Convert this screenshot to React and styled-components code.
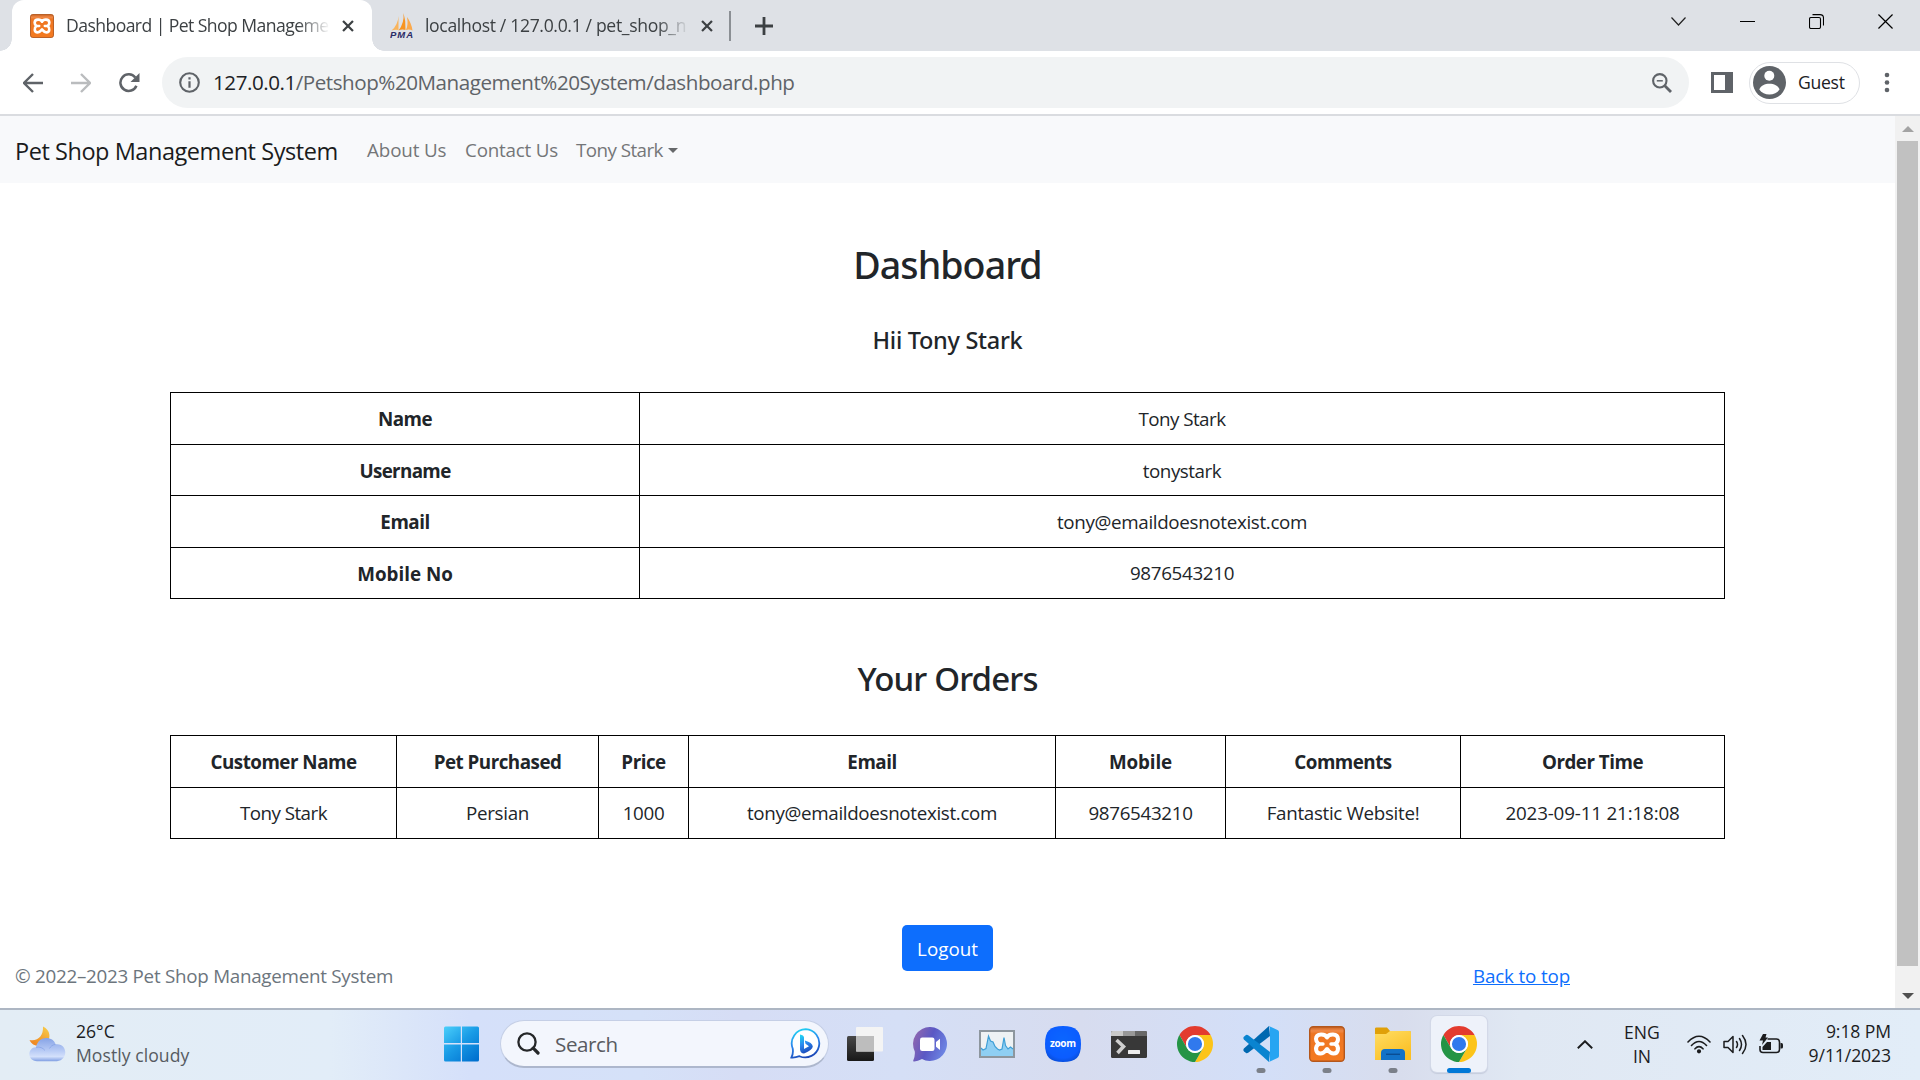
import React from 'react';
import styled, { createGlobalStyle, css } from 'styled-components';

const GlobalStyle = createGlobalStyle`
  *, *::before, *::after { box-sizing: border-box; }
  body { margin: 0; overflow: hidden; background: #fff; }
  svg { display: block; flex: none; }
`;

const Desktop = styled.div`
  width: 1920px;
  height: 1080px;
  display: flex;
  flex-direction: column;
  overflow: hidden;
  font-family: "Open Sans", "Noto Sans", sans-serif;
  color: #212529;
  white-space: nowrap;
`;

/* ---------- browser chrome ---------- */

const TabStrip = styled.header`
  height: 51px;
  flex: none;
  display: flex;
  background: #dee1e6;
  padding-left: 12px;
`;

const Tab = styled.div`
  position: relative;
  display: flex;
  align-items: center;
  height: 51px;
  width: ${(p) => p.$width}px;
  padding-left: 18px;
  border-radius: 12px 12px 0 0;
  ${(p) =>
    p.$active &&
    css`
      background: #fff;
      &::before,
      &::after {
        content: '';
        position: absolute;
        bottom: 0;
        width: 12px;
        height: 12px;
      }
      &::before {
        left: -12px;
        background: radial-gradient(circle at 0 0, transparent 11.5px, #fff 12px);
      }
      &::after {
        right: -12px;
        background: radial-gradient(circle at 100% 0, transparent 11.5px, #fff 12px);
      }
    `}
`;

const TabTitle = styled.span`
  width: ${(p) => p.$width}px;
  margin: 0 12px 0 ${(p) => p.$left}px;
  padding-bottom: 1px;
  overflow: hidden;
  font-size: 17.6px;
  line-height: 28px;
  letter-spacing: ${(p) => p.$track}px;
  color: #3c4043;
  mask-image: linear-gradient(90deg, #000 232px, transparent 264px);
`;

const TabDivider = styled.i`
  width: 1.5px;
  height: 30px;
  margin: 11px 24px 0 0;
  background: #8b8f94;
`;

const WindowControls = styled.div`
  margin-left: auto;
  display: flex;
  height: 43px;
`;

const WindowButton = styled.span`
  width: 69px;
  display: grid;
  place-items: center;
`;

const Centered = styled.span`
  display: flex;
  align-items: center;
`;

const Toolbar = styled.div`
  height: 65px;
  flex: none;
  display: flex;
  align-items: center;
  border-bottom: 2px solid #dadce0;
  background: #fff;
  padding-left: 23px;
`;

const NavIcons = styled.div`
  display: flex;
  gap: 28px;
  width: 139px;
`;

const Omnibox = styled.div`
  width: 1527px;
  height: 51px;
  display: flex;
  align-items: center;
  padding: 0 17px;
  border-radius: 26px;
  background: #f1f3f4;
`;

const Url = styled.span`
  flex: 1;
  margin-left: 13px;
  padding-bottom: 2px;
  font-size: 20.6px;
  line-height: 30px;
  letter-spacing: -0.46px;
  color: #5f6368;
`;

const Host = styled.span`
  color: #202124;
`;

const PanelIcon = styled.span`
  margin: 0 16px 0 22px;
`;

const Profile = styled.div`
  width: 111px;
  height: 42px;
  display: flex;
  align-items: center;
  gap: 12px;
  padding-left: 3px;
  border: 1.5px solid #dfe1e5;
  border-radius: 21px;
  font-size: 17.6px;
  letter-spacing: -0.3px;
  color: #202124;
`;

const ProfileName = styled.span`
  padding-bottom: 1px;
`;

const Kebab = styled.span`
  margin-left: 24px;
`;

/* ---------- web page ---------- */

const Viewport = styled.div`
  height: 892px;
  flex: none;
  display: flex;
`;

const Page = styled.div`
  flex: 1;
  display: flex;
  flex-direction: column;
  font-size: 18.8px;
  line-height: 29px;
`;

const Navbar = styled.nav`
  height: 67px;
  display: flex;
  align-items: center;
  padding: 2px 0 0 15px;
  background: #f8f9fb;
`;

const Brand = styled.a`
  width: 352px;
  padding-top: 2px;
  font-size: 23.5px;
  letter-spacing: -0.45px;
  color: #1a1b1c;
`;

const NavLink = styled.a`
  display: flex;
  align-items: center;
  width: ${(p) => p.$width}px;
  letter-spacing: ${(p) => p.$track}px;
  color: #747678;
`;

const Caret = styled.i`
  margin-left: 5px;
  border: 5.5px solid transparent;
  border-top-color: #66686a;
  border-bottom: 0;
`;

const Main = styled.main`
  display: flex;
  flex-direction: column;
  align-items: center;
`;

const Heading = styled.h1`
  margin: ${(p) => p.$top}px 0 0;
  font-family: "Noto Sans", sans-serif;
  font-weight: 500;
  font-size: ${(p) => p.$size}px;
  line-height: ${(p) => p.$line}px;
  letter-spacing: ${(p) => p.$track}px;
`;

const Table = styled.table`
  width: 1555px;
  margin-top: ${(p) => p.$top}px;
  table-layout: fixed;
  border-collapse: collapse;
  text-align: center;
`;

const Col = styled.col`
  width: ${(p) => p.$width}px;
`;

const Row = styled.tr`
  height: ${(p) => p.$height}px;
`;

const HeadCell = styled.th`
  padding: 2px 0 0;
  border: 1px solid #000;
  font-weight: 700;
  letter-spacing: ${(p) => p.$track ?? -0.5}px;
`;

const Cell = styled.td`
  padding: ${(p) => p.$drop ?? 0}px 0 0;
  border: 1px solid #000;
  letter-spacing: ${(p) => p.$track ?? -0.32}px;
`;

const LogoutButton = styled.button`
  width: 91px;
  height: 46px;
  margin-top: 86px;
  padding: 3px 0 0;
  border: 0;
  border-radius: 5px;
  background: #0d6efd;
  color: #fff;
  font: inherit;
`;

const Footer = styled.footer`
  display: flex;
  justify-content: space-between;
  margin-top: -9px;
  padding: 0 325px 0 15px;
  color: #6c757d;
  letter-spacing: -0.26px;
`;

const TopLink = styled.a`
  color: #0d6efd;
  text-decoration: underline;
  letter-spacing: -0.15px;
`;

const Scrollbar = styled.aside`
  width: 25px;
  display: flex;
  flex-direction: column;
  align-items: center;
  background: #f1f1f1;
`;

const ScrollArrow = styled.span`
  height: 25px;
  display: flex;
  align-items: center;
`;

const ScrollThumb = styled.span`
  width: 21px;
  height: 825px;
  margin-bottom: 17px;
  background: #c1c1c1;
`;

/* ---------- taskbar ---------- */

const Taskbar = styled.div`
  height: 72px;
  flex: none;
  display: flex;
  align-items: center;
  padding: 0 29px 2px 29px;
  border-top: 2px solid #adb6c3;
  background: linear-gradient(90deg, #e3edf5 0, #e2edf8 330px, #d5e0fa 470px, #d5e1f8 640px, #d6ddf5 740px, #d5dff6 900px, #d7dcef 1080px, #d3dff8 1260px, #d8dded 1400px, #e0e8f3 1520px, #e2edf8 1920px);
`;

const Weather = styled.div`
  width: 415px;
  display: flex;
  align-items: center;
  gap: 10px;
`;

const Lines = styled.div`
  width: ${(p) => p.$width}px;
  text-align: ${(p) => p.$align || 'left'};
  font-size: 17.6px;
  line-height: 24px;
  letter-spacing: ${(p) => p.$track || 0}px;
  color: #1b1c1e;
  margin: ${(p) => p.$shift || 0}px ${(p) => p.$after || 0}px 0 0;
`;

const Muted = styled.div`
  color: #565b61;
  letter-spacing: 0.05px;
`;

const SearchBox = styled.div`
  width: 329px;
  height: 48px;
  margin: 0 3px 0 20px;
  display: flex;
  align-items: center;
  padding: 0 7px 0 16px;
  border: 1.5px solid #c5cfe6;
  border-bottom: 2px solid #adb7cd;
  border-radius: 24px;
  background: #f3f6fd;
`;

const SearchLabel = styled.span`
  flex: 1;
  margin-left: 15px;
  font-size: 20.6px;
  letter-spacing: -0.4px;
  color: #595b60;
`;

const AppSlot = styled.div`
  width: 66px;
  display: flex;
  justify-content: center;
`;

const AppTile = styled.div`
  position: relative;
  width: 56px;
  height: 56px;
  display: grid;
  place-items: center;
  border-radius: 6px;
  ${(p) => p.$active && css`background: #eef2fa; box-shadow: 0 0 0 1px #d3d9e8, 0 1px 1px 1px #c5ccdc;`}
`;

const Indicator = styled.i`
  position: absolute;
  bottom: -1px;
  left: 50%;
  transform: translateX(-50%);
  width: ${(p) => (p.$active ? 24 : 9)}px;
  height: 5px;
  border-radius: 2.5px;
  background: ${(p) => (p.$active ? '#0078d7' : '#7b8089')};
`;

const Tray = styled.div`
  margin-left: auto;
  display: flex;
  align-items: center;
`;

const TrayIcons = styled.div`
  display: flex;
  gap: 12px;
  margin-left: 20px;
`;

/* ---------- icons ---------- */

const Xampp = ({ size }) => (
  <svg width={size} height={size} viewBox="0 0 36 36">
    <defs>
      <linearGradient id="xo" x1="0" y1="0" x2="0" y2="1">
        <stop offset="0" stopColor="#c9601f" />
        <stop offset=".12" stopColor="#f08a48" />
        <stop offset=".2" stopColor="#ee7623" />
        <stop offset="1" stopColor="#f47a20" />
      </linearGradient>
    </defs>
    <rect x=".7" y=".7" width="34.6" height="34.6" rx="3.5" fill="url(#xo)" stroke="#b4571c" strokeWidth="1.4" />
    <path d="M18 11.500C16.500 7.800 7.200 6.800 7 13c0 2.600 1.200 3.800 2.600 5C6 20.500 6 27.500 11.500 27.500c4 0 4.500-2.500 6.500-4.500 2 2 2.500 4.500 6.500 4.500 5.500 0 5.500-7 2-9.500 1.400-1.200 2.600-2.400 2.500-5C28.800 6.800 19.500 7.800 18 11.500Z" fill="none" stroke="#fff" strokeWidth="4" strokeLinejoin="round" />
    <path d="M9 18h5M22 18h5" stroke="#fff" strokeWidth="3.400" strokeLinecap="round" />
  </svg>
);

const Pma = () => (
  <svg width="24" height="26" viewBox="0 0 24 26">
    <path d="M8.500 3Q8 12 1.500 17.500Q5 16.500 8.500 17Z" fill="#f9b45c" />
    <path d="M13.500 0Q14.500 10 8.500 17.500Q12 16 15.500 17Q16 8 13.500 0Z" fill="#f79421" />
    <path d="M17 4Q18.500 12 16 17Q19 16 22.500 17.500Q21.500 10 17 4Z" fill="#fba94c" />
    <text x="0" y="24.800" fontFamily="Liberation Sans, sans-serif" fontWeight="700" fontStyle="italic" fontSize="9.500" textLength="23" fill="#2b2b66">PMA</text>
  </svg>
);

const Cross = ({ size, width, color }) => (
  <svg width={size} height={size} viewBox="0 0 14 14" stroke={color} strokeWidth={width} fill="none">
    <path d="M1.200 1.200 12.800 12.800M12.800 1.200 1.200 12.800" />
  </svg>
);

const Plus = () => (
  <svg width="18" height="18" viewBox="0 0 18 18" stroke="#3c4043" strokeWidth="2.800">
    <path d="M9 0V18M0 9H18" />
  </svg>
);

const Arrow = ({ color, flip }) => (
  <svg width="20" height="20" viewBox="0 0 20 20" fill="none" stroke={color} strokeWidth="2.400">
    <path d={flip ? 'M0 10H18.500M10 1 19 10 10 19' : 'M20 10H1.500M10 1 1 10 10 19'} />
  </svg>
);

const Reload = () => (
  <svg width="22" height="20" viewBox="0 0 22 20">
    <path d="M16.300 4.600A8.300 8.300 0 1 0 17.400 12.800" fill="none" stroke="#5f6368" strokeWidth="2.500" />
    <path d="M20.500 0V9H11.500Z" fill="#5f6368" />
  </svg>
);

const Info = () => (
  <svg width="21" height="21" viewBox="0 0 21 21">
    <circle cx="10.500" cy="10.500" r="9.300" fill="none" stroke="#5f6368" strokeWidth="2.100" />
    <path d="M10.500 9.200V15.800M10.500 5.200V7.500" stroke="#5f6368" strokeWidth="2.200" />
  </svg>
);

const ZoomOut = () => (
  <svg width="20" height="20" viewBox="0 0 20 20" fill="none" stroke="#5f6368">
    <circle cx="7.800" cy="7.800" r="6.700" strokeWidth="2.100" />
    <path d="M4.800 7.800H10.800" strokeWidth="1.500" />
    <path d="M12.800 12.800 19 19" strokeWidth="2.800" />
  </svg>
);

const SidePanel = () => (
  <svg width="22" height="21" viewBox="0 0 22 21">
    <path d="M0 0H22V21H0ZM3 3V18H14V3Z" fill="#5f6368" fillRule="evenodd" />
  </svg>
);

const Avatar = () => (
  <svg width="33" height="33" viewBox="0 0 33 33">
    <circle cx="16.500" cy="16.500" r="16.500" fill="#5f6368" />
    <circle cx="16.300" cy="9.800" r="5" fill="#fff" />
    <path d="M6.300 23.500C7.500 19.500 12 17.700 16.400 17.700S25.500 19.500 26.500 23.500C24.500 26.800 20.500 28.600 16.400 28.600S8.500 26.800 6.300 23.500Z" fill="#fff" />
  </svg>
);

const Dots = () => (
  <svg width="6" height="21" viewBox="0 0 6 21" fill="#5f6368">
    <circle cx="3" cy="3" r="2.300" />
    <circle cx="3" cy="10.500" r="2.300" />
    <circle cx="3" cy="18" r="2.300" />
  </svg>
);

const Triangle = ({ down }) => (
  <svg width="12" height="6" viewBox="0 0 12 6">
    <path d={down ? 'M0 0H12L6 6Z' : 'M0 6H12L6 0Z'} fill={down ? '#505050' : '#a3a3a3'} />
  </svg>
);

const WeatherIcon = () => (
  <svg width="37" height="36" viewBox="0 0 37 36">
    <defs>
      <linearGradient id="moon" x1="0" y1="1" x2=".6" y2="0">
        <stop offset="0" stopColor="#ee7b1c" />
        <stop offset="1" stopColor="#f6c445" />
      </linearGradient>
      <linearGradient id="cloud" x1="0" y1="0" x2="0" y2="1">
        <stop offset="0" stopColor="#86a3e6" />
        <stop offset=".55" stopColor="#b8cbf5" />
        <stop offset=".8" stopColor="#d3e0fb" />
        <stop offset="1" stopColor="#809fe3" />
      </linearGradient>
    </defs>
    <path d="M14 .5C21.500 4 22.500 12.500 17 17.500 11 22 3 20 .5 14 9 15.500 14.500 10 14 .5Z" fill="url(#moon)" />
    <path d="M8 35.200C-2 35-2 21.500 7 21.300 9 9.500 24 9.500 26.500 18.300 39 16.500 39.500 34.500 28 35.200Z" fill="url(#cloud)" />
    <path d="M7 21.300C11 20.500 14 22 16 24.500M26.500 18.300C23.500 18.800 21.500 20.500 20.500 22.500" fill="none" stroke="#7d9be2" strokeWidth="1" opacity=".6" />
  </svg>
);

const Start = () => (
  <svg width="36" height="36" viewBox="0 0 36 36">
    <defs>
      <linearGradient id="win" gradientUnits="userSpaceOnUse" x1="0" y1="0" x2="30" y2="36">
        <stop offset="0" stopColor="#4cd0fb" />
        <stop offset=".5" stopColor="#199be6" />
        <stop offset="1" stopColor="#0070cf" />
      </linearGradient>
    </defs>
    <path d="M1.500 .5H16.800V17H0V2Q0 .5 1.500.5ZM18 .5H33.500Q35 .5 35 2V17H18ZM0 18.500H16.800V35.500H1.500Q0 35.500 0 34ZM18 18.500H35V34Q35 35.500 33.500 35.500H18Z" fill="url(#win)" />
  </svg>
);

const Magnifier = () => (
  <svg width="23" height="23" viewBox="0 0 23 23" fill="none" stroke="#252729">
    <circle cx="10" cy="10" r="8.600" strokeWidth="2.300" />
    <path d="M16.200 16.200 21 21" strokeWidth="3.200" strokeLinecap="round" />
  </svg>
);

const Bing = () => (
  <svg width="31" height="31" viewBox="0 0 31 31">
    <defs>
      <linearGradient id="bg" x1=".2" y1="0" x2=".5" y2="1">
        <stop offset="0" stopColor="#1fd3f2" />
        <stop offset=".5" stopColor="#2b87ee" />
        <stop offset="1" stopColor="#1b48b8" />
      </linearGradient>
    </defs>
    <path d="M15.800 1.200A14.100 14.100 0 1 1 9.500 28.200Q5 29.800 1.400 29.500 3.600 25.500 2.700 20.500A14.200 14.200 0 0 1 15.800 1.200Z" fill="#fff" stroke="url(#bg)" strokeWidth="1.800" />
    <path d="M10 6.500Q13.800 7 14 9.500V21L19 18.200 15.500 15.800 14.800 12.500Q22.500 14.500 22.800 18.500 22.500 22 14 25.500 10.500 25.500 10 21.500Z" fill="url(#bg)" />
  </svg>
);

const TaskView = () => (
  <svg width="36" height="34" viewBox="0 0 36 34">
    <defs>
      <linearGradient id="tv" x1="0" y1="0" x2="0" y2="1">
        <stop offset="0" stopColor="#484848" />
        <stop offset="1" stopColor="#181818" />
      </linearGradient>
    </defs>
    <rect y="9" width="27" height="25" rx="1.500" fill="url(#tv)" />
    <rect x="9" y="0" width="27" height="24.500" rx="1" fill="#f4f4f4" />
    <rect x="9" y="9" width="18" height="15.500" fill="#bdbdbd" />
  </svg>
);

const Chat = () => (
  <svg width="36" height="35" viewBox="0 0 36 35">
    <defs>
      <linearGradient id="chat" x1="0" y1=".2" x2="1" y2=".6">
        <stop offset="0" stopColor="#9267ae" />
        <stop offset=".5" stopColor="#5a58c4" />
        <stop offset="1" stopColor="#6d86e4" />
      </linearGradient>
    </defs>
    <path d="M17.500 0A17 17 0 1 1 9 32Q3.500 35 0 34.300 2.300 29.500 1.800 24.500A17 17 0 0 1 17.500 0Z" fill="url(#chat)" />
    <rect x="7" y="10.500" width="14.500" height="13.500" rx="2.200" fill="#fff" />
    <path d="M23 15 27 11.700V23L23 19.800Z" fill="#fff" />
  </svg>
);

const Monitor = () => (
  <svg width="36" height="28" viewBox="0 0 36 28">
    <rect x="1" y="1" width="34" height="26" fill="#eef2f4" stroke="#8d969e" strokeWidth="2" />
    <path d="M2 18 4 20 7 18.500 9.500 6 11.500 11 14 12 16 16.500 18.500 19 20.500 20 23 19 25 7.500 26.500 15.500 29 19 31.500 17 34 19V26H2Z" fill="#8fcff3" />
    <path d="M2 18 4 20 7 18.500 9.500 6 11.500 11 14 12 16 16.500 18.500 19 20.500 20 23 19 25 7.500 26.500 15.500 29 19 31.500 17 34 19" fill="none" stroke="#3f9fd6" strokeWidth="1.200" />
  </svg>
);

const ZoomApp = () => (
  <svg width="36" height="36" viewBox="0 0 36 36">
    <defs>
      <radialGradient id="zm" cx=".5" cy=".4" r=".7">
        <stop offset="0" stopColor="#0b66ff" />
        <stop offset=".7" stopColor="#0b5cff" />
        <stop offset="1" stopColor="#0846c4" />
      </radialGradient>
    </defs>
    <path d="M18 0C31 0 36 5 36 18S31 36 18 36 0 31 0 18 5 0 18 0Z" fill="url(#zm)" />
    <text x="5" y="20.800" fontFamily="Open Sans, sans-serif" fontWeight="700" fontSize="10" textLength="26" fill="#fff">zoom</text>
  </svg>
);

const Terminal = () => (
  <svg width="36" height="27" viewBox="0 0 36 27">
    <rect width="36" height="27" rx="1.500" fill="#383838" />
    <path d="M1.500 0H12V5H0V1.500Q0 0 1.500 0Z" fill="#c9c9c9" />
    <path d="M12 0H24V5H12Z" fill="#989898" />
    <path d="M24 0H34.500Q36 0 36 1.500V5H24Z" fill="#686868" />
    <path d="M5.500 9 12.500 15.500 6.500 22" fill="none" stroke="#cfcfcf" strokeWidth="3.600" />
    <rect x="17" y="19" width="12" height="4" rx=".5" fill="#ededed" />
  </svg>
);

const Chrome = () => (
  <svg width="36" height="36" viewBox="0 0 48 48">
    <path d="M24 12H44.780A24 24 0 0 0 3.220 12L13.610 30A12 12 0 0 1 24 12Z" fill="#e33b2e" />
    <path d="M44.780 12H24A12 12 0 0 1 34.390 30L24 48A24 24 0 0 0 44.780 12Z" fill="#fcc419" />
    <path d="M13.610 30 3.220 12A24 24 0 0 0 24 48L34.390 30A12 12 0 0 1 13.610 30Z" fill="#249445" />
    <circle cx="24" cy="24" r="12" fill="#fff" />
    <circle cx="24" cy="24" r="9.400" fill="#3079ed" />
  </svg>
);

const VsCode = () => (
  <svg width="36" height="36" viewBox="0 0 36 36">
    <path d="M26 0 .9 22.500Q-.2 24 .9 25.200L3 27Q4 27.600 5.200 26.800L27 10Z" fill="#0068b0" />
    <path d="M26 36 .9 13.500Q-.2 12 .9 10.800L3 9Q4 8.400 5.200 9.200L27 26Z" fill="#0a84d0" />
    <path d="M26 0 34.500 4Q36 4.700 36 6V30Q36 31.300 34.500 32L26 36Q27 35 27 33.500V2.500Q27 1 26 0Z" fill="#27a5f2" />
  </svg>
);

const Explorer = () => (
  <svg width="36" height="34" viewBox="0 0 36 34">
    <defs>
      <linearGradient id="fold" x1="0" y1="0" x2=".6" y2="1">
        <stop offset="0" stopColor="#ffdd63" />
        <stop offset="1" stopColor="#fbbf24" />
      </linearGradient>
    </defs>
    <path d="M0 1.500Q0 .5 1.500.5H12L15 4H34.500Q36 4 36 5.500V9H0Z" fill="#e0a008" />
    <path d="M0 7H11L15 4H34.500Q36 4 36 5.500V33H0Z" fill="url(#fold)" />
    <path d="M6 33V26Q6 22 10 22H26Q30 22 30 26V33Z" fill="#1272c8" />
    <path d="M11 27.300H25" stroke="#0a4d92" strokeWidth="1.400" />
  </svg>
);

const Wifi = () => (
  <svg width="24" height="19" viewBox="0 0 24 19" fill="none" stroke="#1b1c1e" strokeWidth="1.600" strokeLinecap="round">
    <path d="M1 7Q12-4.500 23 7M4.500 10.500Q12 2.500 19.500 10.500M8 13.800Q12 9.500 16 13.800" />
    <circle cx="12" cy="16.300" r="1.300" fill="#1b1c1e" />
  </svg>
);

const Volume = () => (
  <svg width="24" height="21" viewBox="0 0 24 21" fill="none" stroke="#1b1c1e" strokeWidth="1.500" strokeLinecap="round" strokeLinejoin="round">
    <path d="M1 7.500H5L10 2.500V18.500L5 13.500H1ZM13.500 7.500Q15.500 10.500 13.500 13.500M16.500 4.500Q20.500 10.500 16.500 16.500M19.500 1.500Q26.500 10.500 19.500 19.500" />
  </svg>
);

const Battery = () => (
  <svg width="24" height="21" viewBox="0 0 24 21">
    <path d="M8.500 5H17.500Q20.500 5 20.500 8V15.500Q20.500 18.500 17.500 18.500H4Q1 18.500 1 15.500V12" fill="none" stroke="#1b1c1e" strokeWidth="1.600" />
    <path d="M21.500 9H22.500Q24 9 24 10.500V13Q24 14.500 22.500 14.500H21.500Z" fill="#1b1c1e" />
    <path d="M8 8H12V16H3.500V13Z" fill="#1b1c1e" />
    <path d="M4 0H7.500L6.500 3.500H9L3 11 4 6.500H.5Z" fill="#1b1c1e" />
  </svg>
);

/* ---------- data ---------- */

const profile = [
  { label: 'Name', value: 'Tony Stark', height: 52, headTrack: -0.5, track: -0.55, drop: 2 },
  { label: 'Username', value: 'tonystark', height: 51, headTrack: -0.65, track: -0.45, drop: 2 },
  { label: 'Email', value: 'tony@emaildoesnotexist.com', height: 52, track: -0.33, drop: 2 },
  { label: 'Mobile No', value: '9876543210', height: 51, headTrack: 0, drop: 0 },
];

const orderColumns = [
  { label: 'Customer Name', width: 226, value: 'Tony Stark', track: -0.55 },
  { label: 'Pet Purchased', width: 202, value: 'Persian' },
  { label: 'Price', width: 90, value: '1000' },
  { label: 'Email', width: 367, value: 'tony@emaildoesnotexist.com', track: -0.33 },
  { label: 'Mobile', width: 170, value: '9876543210', headTrack: -0.1 },
  { label: 'Comments', width: 235, value: 'Fantastic Website!' },
  { label: 'Order Time', width: 264, value: '2023-09-11 21:18:08', track: -0.16 },
];

const apps = [
  { name: 'taskview', icon: <TaskView /> },
  { name: 'chat', icon: <Chat /> },
  { name: 'monitor', icon: <Monitor /> },
  { name: 'zoom', icon: <ZoomApp /> },
  { name: 'terminal', icon: <Terminal /> },
  { name: 'chrome', icon: <Chrome /> },
  { name: 'code', icon: <VsCode />, open: true },
  { name: 'xampp', icon: <Xampp size={36} />, open: true },
  { name: 'files', icon: <Explorer />, open: true },
  { name: 'chrome-guest', icon: <Chrome />, open: true, active: true },
];

export default function App() {
  return (
    <Desktop>
      <GlobalStyle />
      <TabStrip>
        <Tab $active $width={360}>
          <Xampp size={24} />
          <TabTitle $left={12} $width={264} $track={-0.57}>Dashboard | Pet Shop Manageme</TabTitle>
          <Cross size={12} width={2.6} color="#3c4043" />
        </Tab>
        <Tab $width={357}>
          <Pma />
          <TabTitle $left={11} $width={264} $track={-0.34}>localhost / 127.0.0.1 / pet_shop_n</TabTitle>
          <Cross size={12} width={2.6} color="#3c4043" />
        </Tab>
        <TabDivider />
        <Centered><Plus /></Centered>
        <WindowControls>
          <WindowButton>
            <svg width="15" height="9" viewBox="0 0 15 9" fill="none" stroke="#222" strokeWidth="1.200"><path d="M.5.5 7.500 8 14.500.5" /></svg>
          </WindowButton>
          <WindowButton>
            <svg width="15" height="1" viewBox="0 0 15 1"><path d="M0 0H15V1H0Z" fill="#000" /></svg>
          </WindowButton>
          <WindowButton>
            <svg width="15" height="15" viewBox="0 0 15 15" fill="none" stroke="#000" strokeWidth="1.100"><rect x=".5" y="3.500" width="11" height="11" rx="1.500" /><path d="M3.500.6H11Q14.500.6 14.500 4V11.500" /></svg>
          </WindowButton>
          <WindowButton><Cross size={17} width={1} color="#000" /></WindowButton>
        </WindowControls>
      </TabStrip>
      <Toolbar>
        <NavIcons>
          <Arrow color="#5f6368" />
          <Arrow color="#babcbe" flip />
          <Reload />
        </NavIcons>
        <Omnibox>
          <Info />
          <Url><Host>127.0.0.1</Host>/Petshop%20Management%20System/dashboard.php</Url>
          <ZoomOut />
        </Omnibox>
        <PanelIcon><SidePanel /></PanelIcon>
        <Profile><Avatar /><ProfileName>Guest</ProfileName></Profile>
        <Kebab><Dots /></Kebab>
      </Toolbar>
      <Viewport>
        <Page>
          <Navbar>
            <Brand>Pet Shop Management System</Brand>
            <NavLink $width={98} $track={-0.12}>About Us</NavLink>
            <NavLink $width={111} $track={-0.2}>Contact Us</NavLink>
            <NavLink $width={110} $track={-0.55}>Tony Stark<Caret /></NavLink>
          </Navbar>
          <Main>
            <Heading $top={59} $size={37.6} $line={46} $track={-0.95}>Dashboard</Heading>
            <Heading as="h5" $top={38} $size={23.5} $line={29} $track={-0.3}>Hii Tony Stark</Heading>
            <Table $top={37}>
              <colgroup><Col $width={469} /><Col $width={1085} /></colgroup>
              <tbody>
                {profile.map((r) => (
                  <Row key={r.label} $height={r.height}>
                    <HeadCell $track={r.headTrack}>{r.label}</HeadCell>
                    <Cell $track={r.track} $drop={r.drop}>{r.value}</Cell>
                  </Row>
                ))}
              </tbody>
            </Table>
            <Heading as="h3" $top={60} $size={33} $line={40} $track={-0.85}>Your Orders</Heading>
            <Table $top={36}>
              <colgroup>{orderColumns.map((c) => <Col key={c.label} $width={c.width} />)}</colgroup>
              <tbody>
                <Row $height={52}>
                  {orderColumns.map((c) => <HeadCell key={c.label} $track={c.headTrack}>{c.label}</HeadCell>)}
                </Row>
                <Row $height={51}>
                  {orderColumns.map((c) => <Cell key={c.label} $track={c.track}>{c.value}</Cell>)}
                </Row>
              </tbody>
            </Table>
            <LogoutButton>Logout</LogoutButton>
          </Main>
          <Footer>
            <span>© 2022–2023 Pet Shop Management System</span>
            <TopLink>Back to top</TopLink>
          </Footer>
        </Page>
        <Scrollbar>
          <ScrollArrow><Triangle /></ScrollArrow>
          <ScrollThumb />
          <ScrollArrow><Triangle down /></ScrollArrow>
        </Scrollbar>
      </Viewport>
      <Taskbar>
        <Weather>
          <WeatherIcon />
          <Lines $width={140} $shift={-2}>26°C<Muted>Mostly cloudy</Muted></Lines>
        </Weather>
        <Start />
        <SearchBox>
          <Magnifier />
          <SearchLabel>Search</SearchLabel>
          <Bing />
        </SearchBox>
        {apps.map((a) => (
          <AppSlot key={a.name}>
            <AppTile $active={a.active}>
              {a.icon}
              {a.open && <Indicator $active={a.active} />}
            </AppTile>
          </AppSlot>
        ))}
        <Tray>
          <svg width="16" height="9" viewBox="0 0 16 9" fill="none" stroke="#1b1c1e" strokeWidth="1.900"><path d="M.8 8.200 8 1.200 15.200 8.200" /></svg>
          <TrayIcons>
            <Lines $width={58} $align="center" $after={4}>ENG<br />IN</Lines>
            <Centered><Wifi /></Centered>
            <Centered><Volume /></Centered>
            <Centered><Battery /></Centered>
          </TrayIcons>
          <Lines $width={108} $align="right" $shift={-2} $track={-0.1}>9:18 PM<br />9/11/2023</Lines>
        </Tray>
      </Taskbar>
    </Desktop>
  );
}
